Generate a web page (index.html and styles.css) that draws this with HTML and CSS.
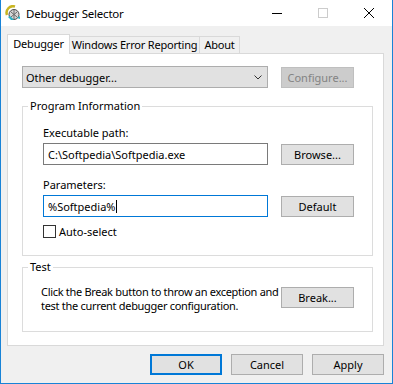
FILE: index.html
```html
<!DOCTYPE html>
<html lang="en">
<head>
  <meta charset="UTF-8">
  <title>Debugger Selector</title>
  <link rel="stylesheet" href="styles.css">
</head>
<body>
<div class="window">
  <div class="titlebar">
    <svg class="app-icon" viewBox="0 0 16 16">
      <path d="M2 10 A6.5 6.5 0 0 1 10 1.5" fill="none" stroke="#c9b521" stroke-width="2.5"/>
      <circle cx="9" cy="9.5" r="5" fill="#d6d6d6" stroke="#4a4a4a" stroke-width="1"/>
      <path d="M6 7 L12 12 M12 7 L6 12 M9 4.5 V14.5" stroke="#6a6a6a" stroke-width="1"/>
      <path d="M3 12 L6 15 L9 15 L5 11 Z" fill="#27b2c6"/>
      <path d="M12 13 L15 11 L15 14 Z" fill="#27b2c6"/>
    </svg>
    <span class="title">Debugger Selector</span>
    <div class="caption-buttons">
      <span class="cap-btn">
        <svg width="10" height="10" viewBox="0 0 10 10"><path d="M0 5.5 H10" stroke="#000" stroke-width="1"/></svg>
      </span>
      <span class="cap-btn">
        <svg width="10" height="10" viewBox="0 0 10 10"><rect x="0.5" y="0.5" width="9" height="9" fill="none" stroke="#cccccc" stroke-width="1"/></svg>
      </span>
      <span class="cap-btn">
        <svg width="10" height="10" viewBox="0 0 10 10"><path d="M0 0 L10 10 M10 0 L0 10" stroke="#000" stroke-width="1"/></svg>
      </span>
    </div>
  </div>

  <div class="client">
    <div class="tabs">
      <div class="tab active">Debugger</div>
      <div class="tab tab-wer">Windows Error Reporting</div>
      <div class="tab tab-about">About</div>
    </div>

    <div class="tab-panel">
      <div class="row">
        <div class="combo">
          <span>Other debugger...</span>
          <svg width="8" height="5" viewBox="0 0 8 5"><path d="M0.5 0.5 L4 4 L7.5 0.5" fill="none" stroke="#333" stroke-width="1"/></svg>
        </div>
        <button class="btn" disabled>Configure...</button>
      </div>

      <fieldset class="group program-group">
        <legend>Program Information</legend>
        <div class="group-body">
          <div class="field">
            <div class="field-label">Executable path:</div>
            <div class="row">
              <div class="textbox">C:\Softpedia\Softpedia.exe</div>
              <button class="btn">Browse...</button>
            </div>
          </div>
          <div class="field">
            <div class="field-label">Parameters:</div>
            <div class="row">
              <div class="textbox focused">%Softpedia%<span class="caret"></span></div>
              <button class="btn">Default</button>
            </div>
          </div>
          <div class="check-row">
            <span class="checkbox"></span>
            <span>Auto-select</span>
          </div>
        </div>
      </fieldset>

      <fieldset class="group test-group">
        <legend>Test</legend>
        <div class="group-body test-row">
          <div class="test-text">Click the Break button to throw an exception and<br>test the current debugger configuration.</div>
          <button class="btn">Break...</button>
        </div>
      </fieldset>
    </div>

    <div class="dialog-buttons">
      <button class="btn dlg-btn default-btn">OK</button>
      <button class="btn dlg-btn">Cancel</button>
      <button class="btn dlg-btn">Apply</button>
    </div>
  </div>
</div>
</body>
</html>
```

FILE: styles.css
```css
body {
  margin: 0;
  font-family: "Noto Sans", sans-serif;
  font-size: 11px;
  color: #000;
  background-color: #fff;
}
.window {
  width: 393px;
  height: 384px;
  box-sizing: border-box;
  border: 1px solid #1883d7;
  border-top: none;
  display: flex;
  flex-direction: column;
}
.titlebar {
  height: 26px;
  flex-shrink: 0;
  display: flex;
  align-items: center;
  background-color: #fff;
}
.app-icon {
  width: 16px;
  height: 16px;
  margin-left: 4px;
}
.title {
  margin-left: 5px;
  font-size: 11.5px;
  letter-spacing: -0.2px;
}
.caption-buttons {
  margin-left: auto;
  display: flex;
  height: 100%;
}
.cap-btn {
  width: 46px;
  display: flex;
  align-items: center;
  justify-content: center;
}
.client {
  flex: 1;
  background-color: #f0f0f0;
  padding: 8px 8px 0 6px;
  display: flex;
  flex-direction: column;
}
.tabs {
  display: flex;
  align-items: flex-end;
  height: 19px;
}
.tab {
  box-sizing: border-box;
  height: 17px;
  border: 1px solid #d9d9d9;
  border-left: none;
  border-bottom: none;
  background-color: #f0f0f0;
  line-height: 15px;
  text-align: center;
  white-space: nowrap;
  letter-spacing: -0.2px;
}
.tab.active {
  width: 63px;
  height: 20px;
  padding-top: 1px;
  margin-bottom: -1px;
  border-left: 1px solid #d9d9d9;
  background-color: #fff;
  position: relative;
  z-index: 1;
}
.tab-wer {
  width: 130px;
}
.tab-about {
  width: 40px;
}
.tab-panel {
  box-sizing: border-box;
  height: 293px;
  background-color: #fff;
  border: 1px solid #d9d9d9;
  padding: 12px 0 0 14px;
}
.row {
  display: flex;
  align-items: center;
  gap: 13px;
}
.combo {
  box-sizing: border-box;
  width: 246px;
  height: 22px;
  background-color: #e1e1e1;
  border: 1px solid #adadad;
  padding: 0 5px 0 3px;
  display: flex;
  align-items: center;
  justify-content: space-between;
}
.btn {
  box-sizing: border-box;
  width: 73px;
  height: 21px;
  padding: 0;
  font: inherit;
  color: #000;
  background-color: #e1e1e1;
  border: 1px solid #adadad;
}
.btn:disabled {
  background-color: #cccccc;
  border-color: #bfbfbf;
  color: #838383;
}
.group {
  box-sizing: border-box;
  width: 351px;
  margin: 0;
  padding: 0;
  min-width: 0;
  border: 1px solid #dcdcdc;
}
.group legend {
  margin-left: 5px;
  padding: 0 2px;
  line-height: 14px;
}
.program-group {
  margin-top: 11px;
}
.program-group .group-body {
  padding: 12px 0 16px 20px;
}
.field + .field {
  margin-top: 12px;
}
.field-label {
  line-height: 15px;
  margin-bottom: 3px;
}
.textbox {
  box-sizing: border-box;
  width: 225px;
  height: 22px;
  border: 1px solid #7a7a7a;
  background-color: #fff;
  padding: 0 4px;
  display: flex;
  align-items: center;
  white-space: nowrap;
}
.textbox.focused {
  border-color: #0078d7;
}
.caret {
  width: 1px;
  height: 13px;
  margin-left: 1px;
  background-color: #000;
}
.check-row {
  display: flex;
  align-items: center;
  gap: 3px;
  margin-top: 7px;
  line-height: 15px;
}
.checkbox {
  box-sizing: border-box;
  width: 13px;
  height: 13px;
  border: 1px solid #333;
  background-color: #fff;
}
.test-group {
  margin-top: 4px;
}
.test-row {
  display: flex;
  align-items: flex-start;
  padding: 11px 0 18px 18px;
}
.test-text {
  width: 240px;
  line-height: 14px;
  white-space: nowrap;
  letter-spacing: -0.3px;
}
.test-row .btn {
  margin-top: 2px;
}
.dialog-buttons {
  display: flex;
  justify-content: flex-end;
  gap: 9px;
  margin-top: 8px;
}
.dlg-btn {
  width: 72px;
}
.default-btn {
  border: 2px solid #0078d7;
}
```
